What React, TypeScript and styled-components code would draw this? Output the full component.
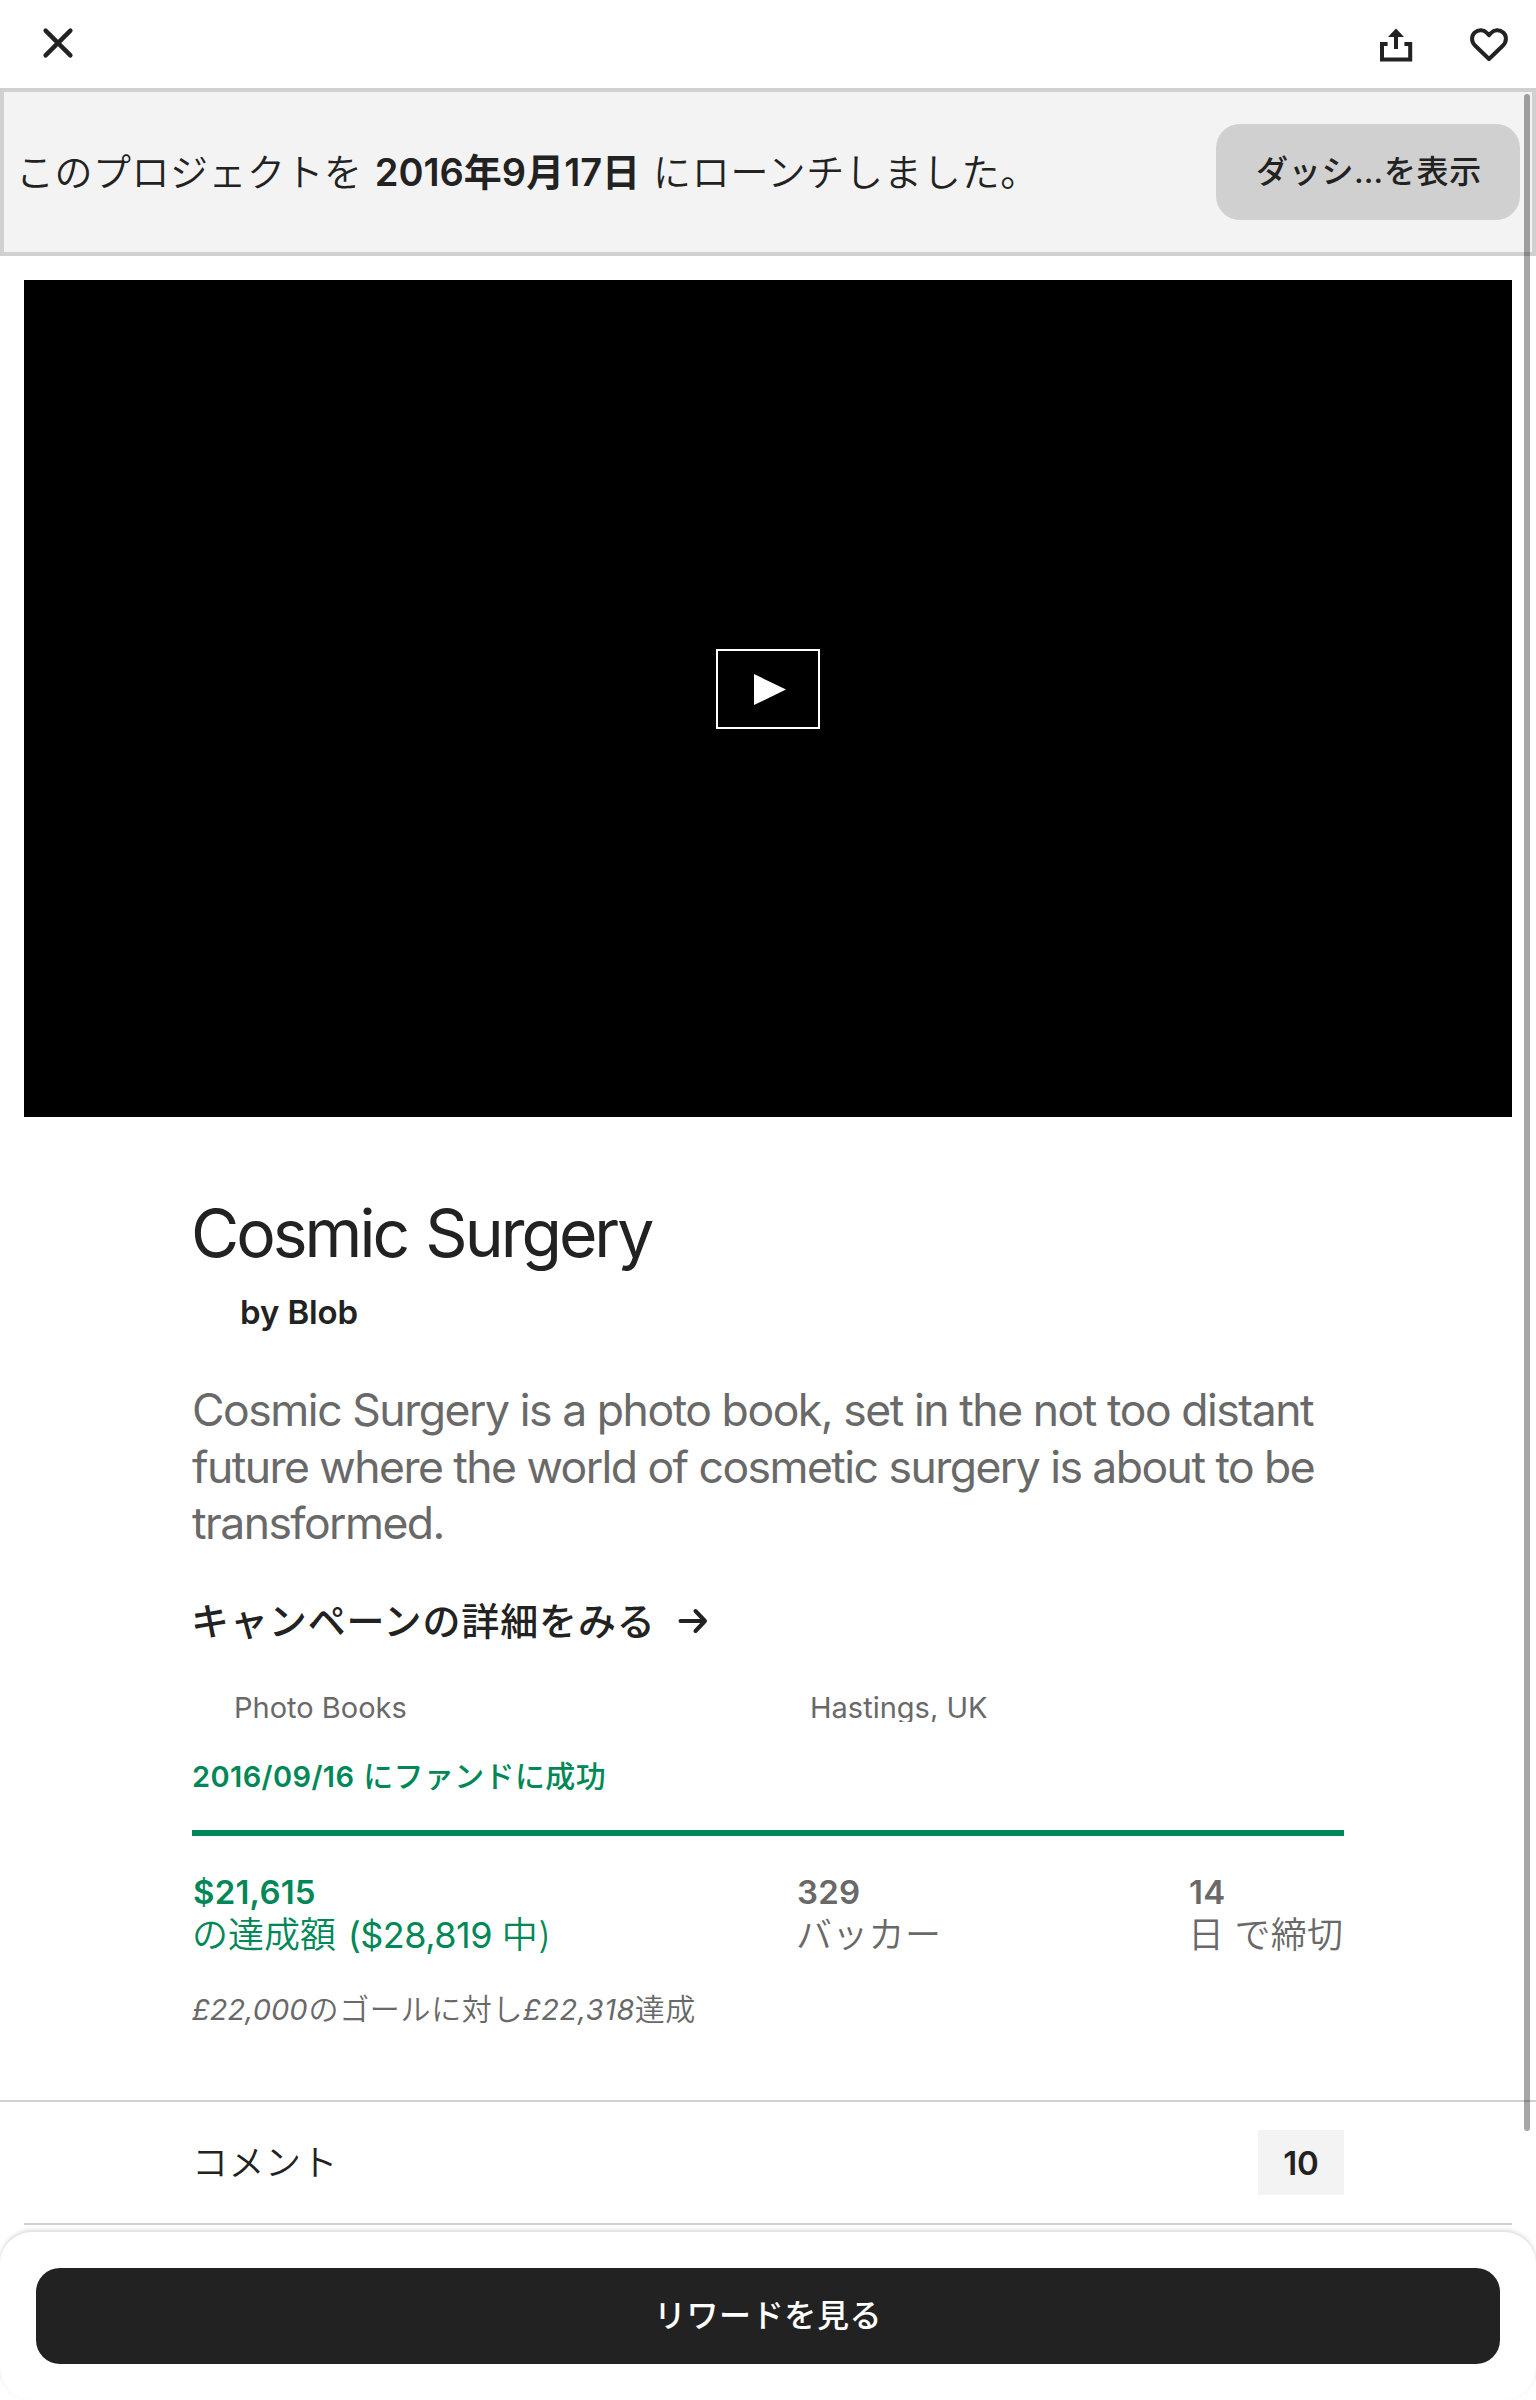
import React from "react";
import styled, { createGlobalStyle } from "styled-components";

const ink = "#222222";
const grey = "#696969";
const green = "#028858";
const line = "#d0d0d0";

const GlobalStyle = createGlobalStyle`
  *, *::before, *::after { box-sizing: border-box; }
  body {
    margin: 0;
    background: #fff;
    color: ${ink};
    font-family: Inter, "Noto Sans CJK JP", sans-serif;
    -webkit-font-smoothing: antialiased;
  }
  h1, p { margin: 0; font-weight: 400; }
  button { border: 0; padding: 0; background: none; color: inherit; font-family: inherit; }
`;

const Page = styled.div`
  position: relative;
  width: 1536px;
  height: 2400px;
  overflow: hidden;
  display: flex;
  flex-direction: column;
  background: #fff;
`;

const NavBar = styled.header`
  height: 88px;
  flex: none;
  display: flex;
  justify-content: space-between;
  align-items: center;
  padding: 0 28px 2px 42px;
`;

const NavActions = styled.div`
  display: flex;
  gap: 56px;
  padding-top: 4px;
`;

const IconButton = styled.button`
  display: flex;
  svg { display: block; }
`;

const Banner = styled.section`
  height: 168px;
  flex: none;
  display: flex;
  align-items: center;
  justify-content: space-between;
  padding: 0 12px;
  border: 4px solid ${line};
  background: #f3f3f3;
`;

const Run = styled.span<{ $size?: number; $track?: number; $weight?: number; $shift?: number }>`
  line-height: 1;
  ${(p) => p.$size !== undefined && `font-size: ${p.$size}px;`}
  ${(p) => p.$weight !== undefined && `font-weight: ${p.$weight};`}
  ${(p) => p.$track !== undefined && `letter-spacing: ${p.$track}px;`}
  ${(p) => p.$shift !== undefined && `margin-left: ${p.$shift}px;`}
`;

const BannerText = styled.p`
  font-size: 38px;
  line-height: 48px;
  font-weight: 350;
  white-space: pre;
`;

const DashboardButton = styled.button`
  width: 304px;
  height: 96px;
  padding-left: 2px;
  border-radius: 24px;
  background: ${line};
  color: ${ink};
  font-size: 32px;
  line-height: 40px;
  font-weight: 500;
  letter-spacing: 0.7px;
`;

const Video = styled.div`
  flex: none;
  height: 837px;
  margin: 24px 24px 0;
  display: flex;
  align-items: center;
  justify-content: center;
  background: #000;
`;

const PlayButton = styled.button`
  width: 104px;
  height: 80px;
  margin-top: -19px;
  padding-left: 4px;
  display: flex;
  align-items: center;
  justify-content: center;
  border: 2.5px solid #fff;
`;

const Content = styled.main`
  padding: 0 192px;
`;

const Title = styled.h1`
  margin: 76px 0 0 -1px;
  font-size: 66px;
  line-height: 80px;
  letter-spacing: -3px;
  word-spacing: 2.6px;
`;

const Creator = styled.p`
  margin-top: 19px;
  padding-left: 48px;
  font-size: 33px;
  line-height: 40px;
  font-weight: 600;
  letter-spacing: -0.1px;
`;

const Blurb = styled.p`
  height: 170px;
  margin-top: 50px;
  color: ${grey};
  font-size: 44.5px;
  line-height: 56.6px;
  white-space: nowrap;
`;

const CampaignLink = styled.div`
  margin: 45px 0 0 -1px;
  display: flex;
  align-items: center;
  gap: 22px;
  font-size: 38px;
  line-height: 48px;
  font-weight: 500;
  letter-spacing: 0.88px;
`;

const MetaRow = styled.div`
  margin-top: 45px;
  height: 32px;
  display: grid;
  grid-template-columns: 1fr 1fr;
  overflow: hidden;
`;

const Meta = styled.span`
  padding-left: 42px;
  color: ${grey};
  font-size: 29px;
  line-height: 36px;
`;

const Funded = styled.p`
  margin-top: 37px;
  color: ${green};
  font-size: 29px;
  line-height: 36px;
  font-weight: 600;
  white-space: pre;
`;

const Progress = styled.div`
  height: 6px;
  margin-top: 35px;
  background: ${green};
`;

const Stats = styled.div`
  margin-top: 36px;
  display: grid;
  grid-template-columns: 604px 392px auto;
`;

const Stat = styled.div<{ $color: string }>`
  display: flex;
  flex-direction: column;
  color: ${(p) => p.$color};
  white-space: pre;
`;

const StatValue = styled.span`
  padding-left: 1px;
  font-size: 33px;
  line-height: 41px;
  font-weight: 600;
  letter-spacing: 0.2px;
`;

const StatLabel = styled.span`
  font-size: 36px;
  line-height: 44px;
  font-weight: 350;
`;

const Converted = styled.p`
  margin-top: 35px;
  color: ${grey};
  font-size: 29px;
  line-height: 36px;
  font-weight: 350;
  white-space: pre;
`;

const Slanted = styled(Run)`
  font-style: italic;
  font-weight: 400;
`;

const Comments = styled.section`
  flex: none;
  margin-top: 72px;
  border-top: 2px solid ${line};
  padding: 0 24px;
`;

const CommentsRow = styled.div`
  height: 123px;
  padding: 0 168px;
  display: flex;
  align-items: center;
  justify-content: space-between;
  border-bottom: 2px solid ${line};
  font-size: 36px;
  line-height: 44px;
  font-weight: 350;
`;

const Count = styled.span`
  width: 86px;
  height: 65px;
  display: flex;
  align-items: center;
  justify-content: center;
  background: #f3f3f3;
  font-size: 33px;
  font-weight: 600;
`;

const Dock = styled.footer`
  flex: none;
  height: 168px;
  margin-top: 7px;
  padding: 36px;
  border-radius: 32px;
  background: #fff;
  box-shadow: 0 -2px 4px rgba(0, 0, 0, 0.15);
`;

const RewardsButton = styled.button`
  width: 100%;
  height: 96px;
  border-radius: 24px;
  background: ${ink};
  color: #fff;
  font-size: 32px;
  line-height: 40px;
  font-weight: 500;
  letter-spacing: 0.6px;
`;

const ScrollThumb = styled.div`
  position: absolute;
  top: 94px;
  right: 6px;
  width: 6px;
  height: 2037px;
  border-radius: 3px;
  background: rgba(0, 0, 0, 0.35);
`;

export default function App() {
  return (
    <>
      <GlobalStyle />
      <Page lang="ja">
        <NavBar>
          <IconButton aria-label="閉じる">
            <svg width="32" height="32" viewBox="0 0 32 32" fill="none" stroke={ink} strokeWidth="4.4" strokeLinecap="round">
              <path d="M3.6 3.6 28.4 28.4M28.4 3.6 3.6 28.4" />
            </svg>
          </IconButton>
          <NavActions>
            <IconButton aria-label="共有">
              <svg width="34" height="34" viewBox="0 0 34 34" fill="none" stroke={ink} strokeWidth="4">
                <path d="M7.6 16H2V31.6H30.2V16H24.4M16 21V8" />
                <path d="M16 .6 24 8.9H8Z" fill={ink} stroke="none" />
              </svg>
            </IconButton>
            <IconButton aria-label="保存">
              <svg width="38" height="34" viewBox="0 0 38 34" fill="none" stroke={ink} strokeWidth="4" strokeLinejoin="round">
                <path d="M19 31 5 17.5C.8 13 1.5 7.5 4.8 4.5C8.5 1.3 14 1.8 17 5L19 7.3 21 5C24 1.8 29.5 1.3 33.2 4.5C36.5 7.5 37.2 13 33 17.5Z" />
              </svg>
            </IconButton>
          </NavActions>
        </NavBar>

        <Banner>
          <BannerText>
            <Run $track={0.5}>このプロジェクトを</Run> <Run $weight={600} $shift={1.5}>2016年9月17日</Run> <Run $track={0.8} $shift={2.2}>にローンチしました。</Run>
          </BannerText>
          <DashboardButton>ダッシ…を表示</DashboardButton>
        </Banner>

        <Video>
          <PlayButton aria-label="再生">
            <svg width="32" height="31" viewBox="0 0 32 31">
              <path d="M0 0 32 15.5 0 31Z" fill="#fff" />
            </svg>
          </PlayButton>
        </Video>

        <Content>
          <Title>Cosmic Surgery</Title>
          <Creator>by Blob</Creator>
          <Blurb>
            <Run $track={-1.45}>Cosmic Surgery is a photo book, set in the not too distant</Run>
            <br />
            <Run $track={-1.54}>future where the world of cosmetic surgery is about to be</Run>
            <br />
            <Run $track={-1.55}>transformed.</Run>
          </Blurb>
          <CampaignLink>
            キャンペーンの詳細をみる
            <svg width="30" height="26" viewBox="0 0 30 26" fill="none" stroke={ink} strokeWidth="4" strokeLinecap="round" strokeLinejoin="round">
              <path d="M2.5 13H27M17.5 3 27 13 17.5 23" />
            </svg>
          </CampaignLink>
          <MetaRow>
            <Meta>Photo Books</Meta>
            <Meta>Hastings, UK</Meta>
          </MetaRow>
          <Funded>
            <Run $track={0.4}>2016/09/16 </Run>
            <Run $size={30} $weight={500} $track={0.35} $shift={1}>にファンドに成功</Run>
          </Funded>
          <Progress />
          <Stats>
            <Stat $color={green}>
              <StatValue>$21,615</StatValue>
              <StatLabel>
                <Run>の達成額 </Run>
                <Run $track={-0.5} $weight={400} $shift={1.5}>($28,819 </Run>
                <Run $track={0.5}>中)</Run>
              </StatLabel>
            </Stat>
            <Stat $color={grey}>
              <StatValue>329</StatValue>
              <StatLabel><Run $track={0.3}>バッカー</Run></StatLabel>
            </Stat>
            <Stat $color={grey}>
              <StatValue>14</StatValue>
              <StatLabel><Run $track={0.2}>日 で締切</Run></StatLabel>
            </Stat>
          </Stats>
          <Converted>
            <Slanted>£22,000</Slanted>
            <Run $size={30} $track={0.65} $shift={1}>のゴールに対し</Run>
            <Slanted $track={0.5}>£22,318</Slanted>
            <Run $size={30} $track={0.5}>達成</Run>
          </Converted>
        </Content>

        <Comments>
          <CommentsRow>
            <Run $track={0.5}>コメント</Run>
            <Count>10</Count>
          </CommentsRow>
        </Comments>

        <Dock>
          <RewardsButton>リワードを見る</RewardsButton>
        </Dock>
        <ScrollThumb />
      </Page>
    </>
  );
}
